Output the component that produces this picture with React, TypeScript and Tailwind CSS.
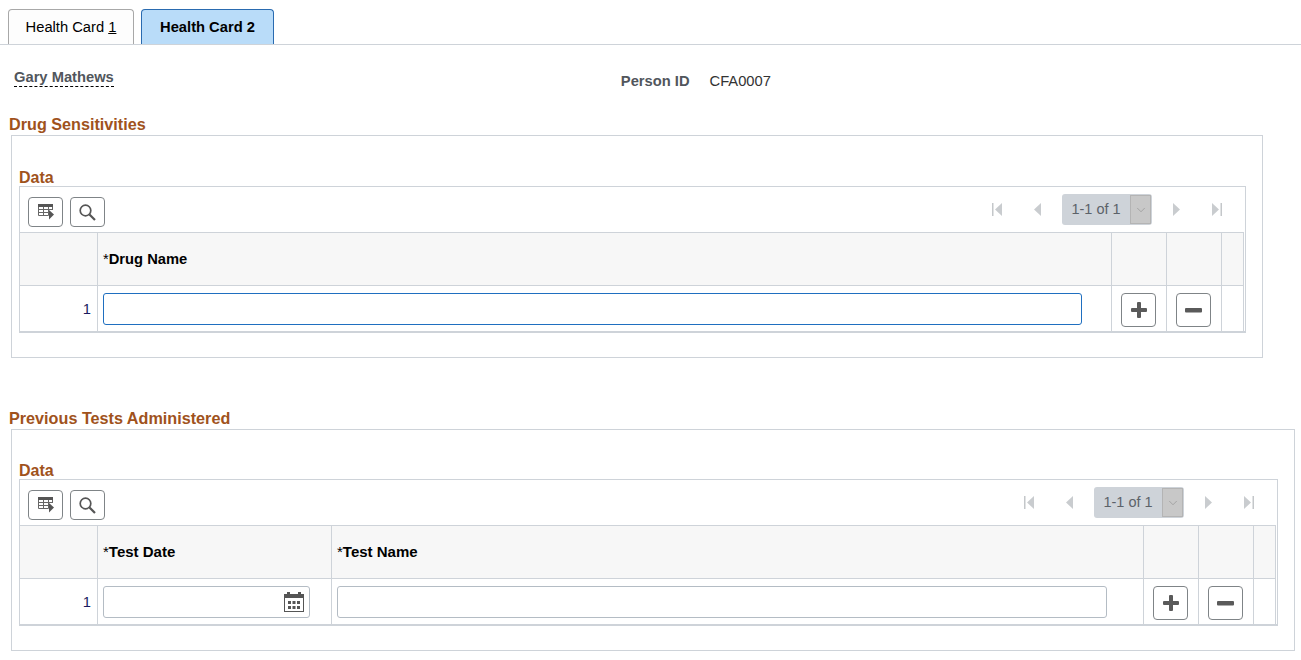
import React from 'react';
import { ChevronDown } from 'lucide-react';

const ArrowIcon = ({ dir, bar }: { dir: 'left' | 'right'; bar?: boolean }) => (
    <svg width={bar ? 10 : 7} height="13" viewBox={bar ? '0 0 10 13' : '0 0 7 13'} className="block">
        {dir === 'left' && bar && (
            <>
                <rect x="0" y="0" width="1.5" height="13" fill="#c4c7ca" />
                <path d="M10 0 L3 6.500 L10 13 Z" fill="#c9cccf" />
            </>
        )}
        {dir === 'left' && !bar && <path d="M7 0 L0 6.500 L7 13 Z" fill="#c9cccf" />}
        {dir === 'right' && !bar && <path d="M0 0 L7 6.500 L0 13 Z" fill="#c9cccf" />}
        {dir === 'right' && bar && (
            <>
                <path d="M0 0 L7 6.500 L0 13 Z" fill="#c9cccf" />
                <rect x="8.500" y="0" width="1.500" height="13" fill="#c4c7ca" />
            </>
        )}
    </svg>
);

const GridIcon = () => (
    <svg width="16" height="16" viewBox="0 0 16 16" className="block">
        <rect x="0" y="0" width="15" height="3" fill="#555" />
        <path d="M0.500 3v8.500h10M5.500 3v8.500M10.500 3v8.500M0.500 5.500h14M0.500 8.500h10M14.500 3v3" stroke="#666" strokeWidth="1" fill="none" />
        <path d="M11 6 L16 10.500 L11 15.500 Z" fill="#555" />
    </svg>
);

const SearchIcon = () => (
    <svg width="17" height="17" viewBox="0 0 17 17" className="block">
        <circle cx="6.500" cy="6.500" r="5.300" stroke="#555" strokeWidth="1.700" fill="none" />
        <path d="M10.500 10.500 L16 16" stroke="#555" strokeWidth="2.200" />
    </svg>
);

const CalendarIcon = () => (
    <svg width="20" height="20" viewBox="0 0 20 20" className="block">
        <rect x="0.500" y="3.500" width="19" height="16" fill="none" stroke="#555" />
        <rect x="0" y="2" width="20" height="4" fill="#555" />
        <rect x="3" y="0" width="3" height="3" fill="#555" />
        <rect x="14" y="0" width="3" height="3" fill="#555" />
        <path d="M4 9h3v3H4zM8.500 9h3v3h-3zM13 9h3v3h-3zM4 14h3v3H4zM8.500 14h3v3h-3zM13 14h3v3h-3z" fill="#555" />
    </svg>
);

const PlusIcon = () => (
    <svg width="16" height="16" viewBox="0 0 16 16" className="block">
        <rect x="0" y="6" width="16" height="4" rx="1" fill="#5a5a5a" />
        <rect x="6" y="0" width="4" height="16" rx="1" fill="#5a5a5a" />
    </svg>
);

const MinusIcon = () => (
    <svg width="17" height="5" viewBox="0 0 17 5" className="block">
        <rect x="0" y="0" width="17" height="4.500" rx="1" fill="#5a5a5a" />
    </svg>
);

const IconButton = ({ children, className }: { children: React.ReactNode; className: string }) => (
    <button className={`flex items-center justify-center bg-white border border-[#7f8487] rounded-[4px] ${className}`}>
        {children}
    </button>
);

const Toolbar = () => (
    <div className="h-[45px] flex items-start bg-white">
        <div className="flex gap-[7px] pl-2 pt-2.5">
            <IconButton className="w-[35px] h-[30px]"><GridIcon /></IconButton>
            <IconButton className="w-[35px] h-[30px]"><SearchIcon /></IconButton>
        </div>
        <div className="ml-auto flex items-center pt-[7px] pr-[23px]">
            <ArrowIcon dir="left" bar />
            <div className="ml-[32px]"><ArrowIcon dir="left" /></div>
            <div className="ml-[21px] w-[90px] h-[31px] flex items-center bg-[#ced3d9] rounded-[3px]">
                <span className="flex-1 text-center text-[14.500px] text-[#5c6269]">1-1 of 1</span>
                <span className="w-[21px] h-[29px] mr-[1px] flex items-center justify-center bg-[#c8c8c8] border border-[#b4b4b4]">
                    <ChevronDown size={14} strokeWidth={1} color="#8a8a8a" />
                </span>
            </div>
            <div className="ml-[21px]"><ArrowIcon dir="right" /></div>
            <div className="ml-[32px]"><ArrowIcon dir="right" bar /></div>
        </div>
    </div>
);

const ActionCells = () => (
    <>
        <div className="border-l border-[#ced3d9] pl-[9px] pt-[7px]">
            <IconButton className="w-[35px] h-[34px]"><PlusIcon /></IconButton>
        </div>
        <div className="border-l border-[#ced3d9] pl-[9px] pt-[7px]">
            <IconButton className="w-[35px] h-[34px]"><MinusIcon /></IconButton>
        </div>
        <div className="border-l border-[#ced3d9]" />
    </>
);

const HeaderCells = () => (
    <>
        <div className="bg-[#f7f7f7] border-l border-b border-[#ced3d9]" />
        <div className="bg-[#f7f7f7] border-l border-b border-[#ced3d9]" />
        <div className="bg-[#f7f7f7] border-l border-b border-[#ced3d9]" />
    </>
);

const HeaderLabel = ({ text, className }: { text: string; className: string }) => (
    <div className={`bg-[#f7f7f7] border-l border-b border-[#ced3d9] pl-[5px] flex items-center font-bold text-black ${className}`}>
        <span className="font-normal">*</span>{text}
    </div>
);

const RowNumber = () => (
    <div className="pr-[6px] pt-[14px] text-right leading-[18px] text-[#1a1a5e]">1</div>
);

export default function App() {
    return (
        <div className="w-[1301px] h-[660px] overflow-hidden bg-white text-[14.720px] font-['Liberation_Sans',Arial,sans-serif]">
            {/* tabs */}
            <div className="h-[45px] pt-[9px] pl-2 flex gap-[7px] border-b border-[#ced3d9]">
                <div className="w-[126px] h-[35px] flex items-center justify-center bg-[#fdfdfd] border border-b-0 border-[#a8a8a8] rounded-t-[4px] text-black">
                    <span>Health Card <span className="underline">1</span></span>
                </div>
                <div className="w-[133px] h-[35px] flex items-center justify-center bg-[#b9dcf9] border border-b-0 border-[#2a6bb0] rounded-t-[4px] font-bold text-black">
                    Health Card 2
                </div>
            </div>

            {/* person */}
            <div className="h-[58px] flex">
                <div className="ml-[14px] mt-[24px] h-[18px] font-bold text-[#51565c] leading-[16px] border-b border-dashed border-black">Gary Mathews</div>
                <div className="ml-[507px] mt-[27px] font-bold text-[#51565c] leading-[18px]">Person ID</div>
                <div className="ml-[20px] mt-[27px] text-[#333] leading-[18px]">CFA0007</div>
            </div>

            {/* drug sensitivities */}
            <div className="pl-[9px] h-[32px] pt-[12px] text-[16.200px] leading-[18px] font-bold text-[#a0521c]">Drug Sensitivities</div>
            <div className="ml-[11px] w-[1252px] h-[223px] border border-[#ced3d9] pl-[7px] pt-[32px]">
                <div className="h-[18px] text-[16px] leading-[20px] font-bold text-[#a0521c]">Data</div>
                <div className="w-[1227px] h-[147px] border border-b-2 border-[#ced3d9]">
                    <Toolbar />
                    <div className="w-[1224px] border-t border-r border-[#ced3d9] grid grid-cols-[77px_1014px_55px_55px_22px] grid-rows-[53px_45px]">
                        <div className="bg-[#f7f7f7] border-b border-[#ced3d9]" />
                        <HeaderLabel text="Drug Name" className="text-[14.720px]" />
                        <HeaderCells />
                        <RowNumber />
                        <div className="border-l border-[#ced3d9] pl-[5px] pt-[7px]">
                            <div className="w-[979px] h-[32px] border border-[#1f6fc0] rounded-[3px] bg-white" />
                        </div>
                        <ActionCells />
                    </div>
                </div>
            </div>

            {/* previous tests */}
            <div className="mt-[51px] pl-[9px] h-[20px] text-[16.200px] leading-[18px] font-bold text-[#a0521c]">Previous Tests Administered</div>
            <div className="ml-[11px] w-[1284px] h-[222px] border border-[#ced3d9] pl-[7px] pt-[31px]">
                <div className="h-[18px] text-[16px] leading-[20px] font-bold text-[#a0521c]">Data</div>
                <div className="w-[1259px] h-[147px] border border-b-2 border-[#ced3d9]">
                    <Toolbar />
                    <div className="w-[1256px] border-t border-r border-[#ced3d9] grid grid-cols-[77px_234px_812px_55px_55px_22px] grid-rows-[53px_45px]">
                        <div className="bg-[#f7f7f7] border-b border-[#ced3d9]" />
                        <HeaderLabel text="Test Date" className="text-[15px]" />
                        <HeaderLabel text="Test Name" className="text-[15px]" />
                        <HeaderCells />
                        <RowNumber />
                        <div className="border-l border-[#ced3d9] pl-[5px] pt-[7px]">
                            <div className="w-[207px] h-[32px] border border-[#b4bcc4] rounded-[3px] bg-white flex items-center justify-end pr-[5px]">
                                <CalendarIcon />
                            </div>
                        </div>
                        <div className="border-l border-[#ced3d9] pl-[5px] pt-[7px]">
                            <div className="w-[770px] h-[32px] border border-[#b4bcc4] rounded-[3px] bg-white" />
                        </div>
                        <ActionCells />
                    </div>
                </div>
            </div>
        </div>
    );
}
